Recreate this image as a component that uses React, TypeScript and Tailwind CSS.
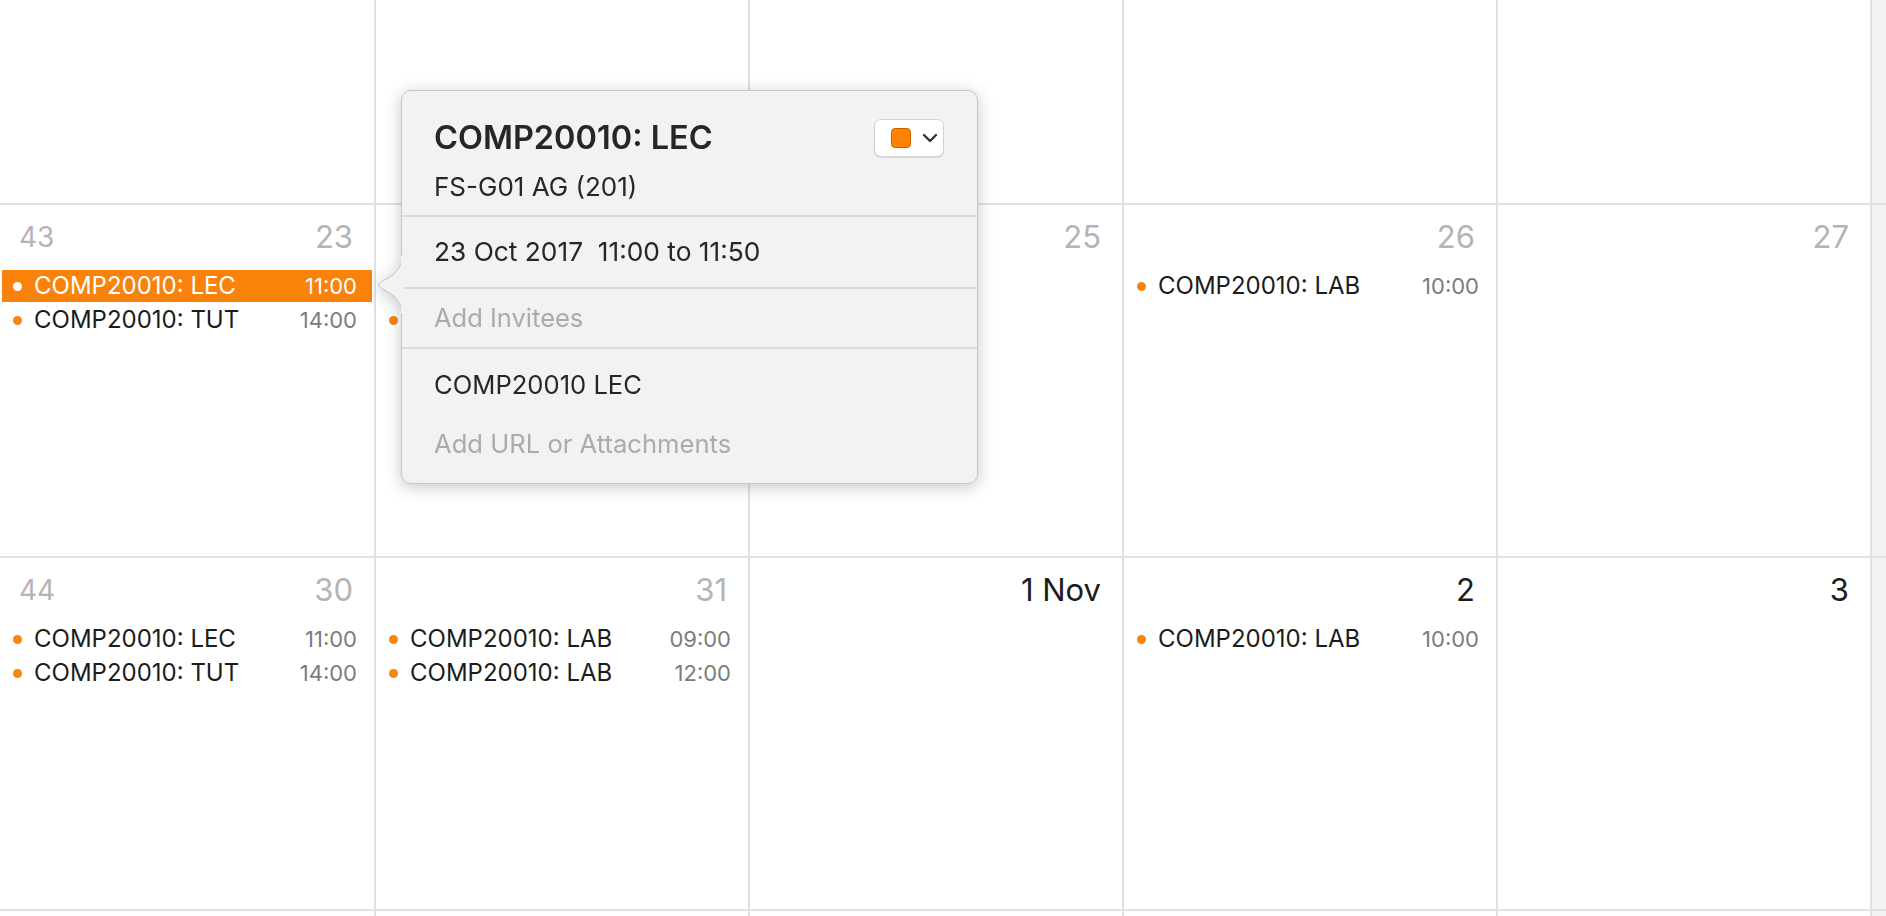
import { ReactNode } from 'react'

interface CalEvent {
  title: string
  time: string
  selected?: boolean
}

interface Day {
  label: string
  current?: boolean
  events: CalEvent[]
}

interface Week {
  number: number
  days: Day[]
}

const lab = (time: string): CalEvent => ({ title: 'COMP20010: LAB', time })

// only the weeks whose headers are on screen; the rows above and below are cut off
const weeks: Week[] = [
  {
    number: 43,
    days: [
      {
        label: '23',
        events: [
          { title: 'COMP20010: LEC', time: '11:00', selected: true },
          { title: 'COMP20010: TUT', time: '14:00' },
        ],
      },
      { label: '24', events: [lab('09:00'), lab('12:00')] },
      { label: '25', events: [] },
      { label: '26', events: [lab('10:00')] },
      { label: '27', events: [] },
    ],
  },
  {
    number: 44,
    days: [
      { label: '30', events: [{ title: 'COMP20010: LEC', time: '11:00' }, { title: 'COMP20010: TUT', time: '14:00' }] },
      { label: '31', events: [lab('09:00'), lab('12:00')] },
      { label: '1 Nov', current: true, events: [] },
      { label: '2', current: true, events: [lab('10:00')] },
      { label: '3', current: true, events: [] },
    ],
  },
]

const cellBase = 'border-r-2 border-b-2 border-[#e1e1e1]'

function EventRow({ event }: { event: CalEvent }) {
  return (
    <div
      className={`mx-[2px] h-[32px] flex items-center pl-[11px] pr-[15px] ${
        event.selected ? 'bg-[#f8820a] text-white' : 'text-[#1c1c1c]'
      }`}
    >
      <span
        className={`w-[9px] h-[9px] rounded-full shrink-0 ${event.selected ? 'bg-white' : 'bg-[#f8850f]'}`}
      />
      <span className="ml-[12px] text-[24px] leading-[30px] flex-1 whitespace-nowrap">{event.title}</span>
      <span
        className={`text-[22px] leading-[30px] whitespace-nowrap ${event.selected ? 'text-white' : 'text-[#7c7c7c]'}`}
      >
        {event.time}
      </span>
    </div>
  )
}

function DayCell({ day, week, first }: { day: Day; week: number; first: boolean }) {
  return (
    <div className={`h-[353px] flex flex-col bg-white ${cellBase}`}>
      <div className="flex items-center h-[36px] mt-[14px] pr-[21px]">
        {first && <span className="pl-[19px] text-[28px] text-[#b4b4b4]">{week}</span>}
        <span className={`ml-auto text-[31px] ${day.current ? 'text-[#1c1c1c]' : 'text-[#b4b4b4]'}`}>
          {day.label}
        </span>
      </div>
      <div className="mt-[15px] flex flex-col gap-[2px]">
        {day.events.map((e, i) => (
          <EventRow key={i} event={e} />
        ))}
      </div>
    </div>
  )
}

// weekend column, only its left edge is on screen
function WeekendCell({ height }: { height: string }) {
  return <div className={`${height} bg-[#f2f2f2] ${cellBase}`} />
}

function EmptyRow({ height }: { height: string }) {
  return (
    <>
      {[0, 1, 2, 3, 4].map((i) => (
        <div key={i} className={`${height} bg-white ${cellBase}`} />
      ))}
      <WeekendCell height={height} />
    </>
  )
}

function Section({ children, className }: { children: ReactNode; className?: string }) {
  return <div className={`px-[32px] border-b-2 border-[#dadada] ${className ?? ''}`}>{children}</div>
}

function Popover() {
  return (
    <div className="absolute left-[401px] top-[90px] drop-shadow-[0_3px_8px_rgba(0,0,0,0.22)]">
      <div className="relative w-[577px] h-[394px] rounded-[10px] bg-[#f2f2f2] border border-[#c6c6c6] text-[#262626]">
        {/* arrow */}
        <svg
          className="absolute left-[-26px] top-[164px]"
          width="28"
          height="60"
          viewBox="0 0 28 60"
        >
          <path
            d="M26 0 C26 9 23 14 17 20 L3.5 28 Q1 30 3.5 32 L17 40 C23 46 26 51 26 60"
            fill="#f2f2f2"
            stroke="#c6c6c6"
            strokeWidth="1"
          />
          <rect x="25" y="1" width="3" height="58" fill="#f2f2f2" />
        </svg>

        <Section className="h-[126px] pt-[28px]">
          <div className="flex items-center justify-between">
            <h2 className="text-[32.5px] leading-[36px] font-semibold">COMP20010: LEC</h2>
            <button className="mr-[1px] w-[70px] h-[38px] rounded-[7px] bg-white border border-[#d3d3d3] shadow-[0_1px_1px_rgba(0,0,0,0.1)] flex items-center pl-[16px]">
              <span className="w-[20px] h-[20px] rounded-[4px] bg-[#ff8300] border border-[#c86500]" />
              <svg className="ml-[11px]" width="16" height="10" viewBox="0 0 16 10">
                <polyline
                  points="2,2 8,8 14,2"
                  fill="none"
                  stroke="#333"
                  strokeWidth="2.4"
                  strokeLinecap="round"
                  strokeLinejoin="round"
                />
              </svg>
            </button>
          </div>
          <p className="mt-[15px] text-[26px] leading-[30px]">FS-G01 AG (201)</p>
        </Section>

        <Section className="h-[72px] flex items-center">
          <p className="text-[26.3px] leading-[30px] whitespace-pre">23 Oct 2017  11:00 to 11:50</p>
        </Section>

        <Section className="h-[60px] flex items-center">
          <p className="text-[25.5px] leading-[30px] text-[#ababab]">Add Invitees</p>
        </Section>

        <div className="px-[32px] pt-[21px]">
          <p className="text-[25.6px] leading-[30px]">COMP20010 LEC</p>
          <p className="mt-[29px] text-[25.6px] leading-[30px] text-[#ababab]">Add URL or Attachments</p>
        </div>
      </div>
    </div>
  )
}

export default function App() {
  return (
    <div
      className="relative w-[1886px] h-[916px] overflow-hidden bg-white"
      style={{ fontFamily: 'Inter, "Noto Sans", sans-serif' }}
    >
      <div className="grid grid-cols-[376px_374px_374px_374px_374px_374px]">
        <EmptyRow height="h-[205px]" />
        {weeks.map((w) => (
          <>
            {w.days.map((d, i) => (
              <DayCell key={`${w.number}-${i}`} day={d} week={w.number} first={i === 0} />
            ))}
            <WeekendCell key={`${w.number}-sat`} height="h-[353px]" />
          </>
        ))}
        <EmptyRow height="h-[40px]" />
      </div>
      <Popover />
    </div>
  )
}
